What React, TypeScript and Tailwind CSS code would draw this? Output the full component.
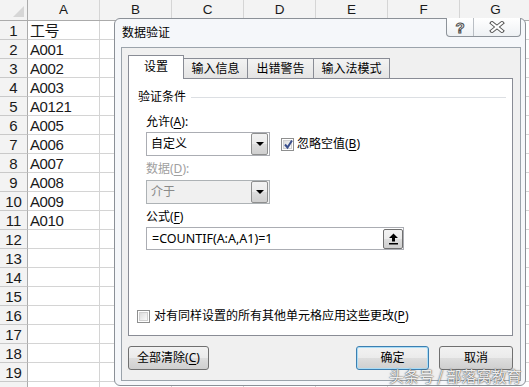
import React from 'react';

const cols = ['A', 'B', 'C', 'D', 'E', 'F', 'G'];
const colA = ['工号', 'A001', 'A002', 'A003', 'A0121', 'A005', 'A006', 'A007', 'A008', 'A009', 'A010'];

const btnBg = 'bg-[linear-gradient(#f2f2f2,#ebebeb_48%,#dddddd_52%,#cfcfcf)]';

// underlined access key, like windows dialogs draw it
const Key: React.FC<{ k: string }> = ({ k }) => <span className="underline underline-offset-2">{k}</span>;

const Sheet: React.FC = () => (
  <div className="font-['Liberation_Sans','Noto_Sans_CJK_SC',sans-serif] text-[15px] text-[#1a1a1a]">
    <div className="flex h-[21px] bg-[#f3f3f3] border-b border-[#ababab] text-[13.5px]">
      <div className="relative w-[28px] shrink-0 border-r border-[#ababab]">
        <div className="absolute right-[3px] bottom-[3px] w-0 h-0 border-l-[11px] border-l-transparent border-b-[11px] border-b-[#d6d6d6]" />
      </div>
      {cols.map((c) => (
        <div key={c} className="w-[72px] shrink-0 border-r border-[#d5d5d5] flex items-center justify-center">
          {c}
        </div>
      ))}
    </div>
    {Array.from({ length: 20 }, (_, i) => (
      <div key={i} className="flex h-[19px]">
        <div className="w-[28px] shrink-0 bg-[#f3f3f3] border-r border-b border-r-[#ababab] border-b-[#c9c9c9] flex items-center justify-center pt-[2px]">
          {i + 1}
        </div>
        {cols.map((c) => (
          <div key={c} className="w-[72px] shrink-0 border-r border-b border-[#d4d4d4] flex items-center pl-[2px] pt-[2px] tracking-[-0.4px]">
            {c === 'A' ? colA[i] ?? '' : ''}
          </div>
        ))}
      </div>
    ))}
  </div>
);

const DropBtn: React.FC = () => (
  <div className={`w-[17px] h-[22px] mr-[1px] rounded-[2px] border border-[#8e8f8f] ${btnBg} flex items-center justify-center`}>
    <div className="w-0 h-0 border-l-[4px] border-r-[4px] border-t-[4px] border-l-transparent border-r-transparent border-t-black" />
  </div>
);

const Checkbox: React.FC<{ checked?: boolean }> = ({ checked }) => (
  <div className="relative w-[13px] h-[13px] shrink-0 border border-[#8e8f8f] bg-white p-[1px]">
    <div className="w-full h-full bg-[linear-gradient(135deg,#dcdcdc,#fbfbfb)] border border-[#d0d0d0]" />
    {checked && (
      <svg className="absolute left-[1px] top-[0px]" width="11" height="11" viewBox="0 0 11 11">
        <path d="M2 5.5 L4.5 8.5 L9 1.5" fill="none" stroke="#3a4f8c" strokeWidth="2" />
      </svg>
    )}
  </div>
);

const Dialog: React.FC = () => (
  <div className="absolute left-[114px] top-[18px] w-[412px] h-[368px] rounded-[6px] border border-[#8b9097] bg-[#f5f7fa] pl-[6px] pr-[4px] pb-[4px] flex flex-col font-['Noto_Sans','Noto_Sans_CJK_SC',sans-serif] text-[12px] leading-[16px] text-black">
    <div className="h-[28px] shrink-0 flex items-center pl-[1px]">数据验证</div>

    {/* help / close caption buttons */}
    <div className="absolute left-[331px] top-[-1px] w-[75px] h-[19px] flex rounded-b-[4px] border border-t-0 border-[#8d939a] bg-[linear-gradient(#ffffff,#eef1f4)] overflow-hidden">
      <div className="w-[27px] border-r border-[#b9bec4] flex items-center justify-center">
        <span className="text-[15px] font-bold leading-none text-white [-webkit-text-stroke:1px_#4d4d4d] font-['Liberation_Sans',sans-serif]">?</span>
      </div>
      <div className="flex-1 flex items-center justify-center">
        <svg width="16" height="12" viewBox="0 0 16 12">
          <g strokeLinecap="square">
            <line x1="3" y1="2" x2="13" y2="10" stroke="#555" strokeWidth="4" />
            <line x1="13" y1="2" x2="3" y2="10" stroke="#555" strokeWidth="4" />
            <line x1="3" y1="2" x2="13" y2="10" stroke="#fff" strokeWidth="2" />
            <line x1="13" y1="2" x2="3" y2="10" stroke="#fff" strokeWidth="2" />
          </g>
        </svg>
      </div>
    </div>

    <div className="flex-1 border border-[#9ba3ab] bg-[#f0f0f0] flex flex-col pt-[7px]">
      {/* tabs */}
      <div className="relative z-10 -mb-px ml-[6px] flex items-end h-[24px]">
        <div className="relative z-10 w-[56px] h-[24px] border border-b-0 border-[#898c95] bg-white flex items-center justify-center pb-[1px]">
          设置
        </div>
        <div className="-ml-px w-[65px] h-[21px] border border-[#898c95] bg-[linear-gradient(#f3f3f3,#e4e4e4)] flex items-center justify-center">
          输入信息
        </div>
        <div className="-ml-px w-[67px] h-[21px] border border-[#898c95] bg-[linear-gradient(#f3f3f3,#e4e4e4)] flex items-center justify-center">
          出错警告
        </div>
        <div className="-ml-px w-[77px] h-[21px] border border-[#898c95] bg-[linear-gradient(#f3f3f3,#e4e4e4)] flex items-center justify-center">
          输入法模式
        </div>
      </div>

      {/* tab panel */}
      <div className="ml-[6px] w-[385px] h-[258px] border border-[#898c95] bg-white pl-[8px] pr-[6px] pt-[10px] flex flex-col">
        <div className="flex items-center h-[16px] ml-[1px]">
          <span>验证条件</span>
          <div className="flex-1 h-px bg-[#dcdfe3] ml-[5px]" />
        </div>

        <div className="ml-[9px] mt-[9px]">
          允许(<Key k="A" />):
        </div>
        <div className="ml-[9px] mt-[2px] flex items-center">
          <div className="w-[124px] h-[24px] border border-[#abadb3] bg-white flex items-center justify-between pl-[4px]">
            <span>自定义</span>
            <DropBtn />
          </div>
          <div className="ml-[11px]">
            <Checkbox checked />
          </div>
          <span className="ml-[3px]">
            忽略空值(<Key k="B" />)
          </span>
        </div>

        <div className="ml-[9px] mt-[5px] text-[#a0a0a0]">
          数据(<Key k="D" />):
        </div>
        <div className="ml-[9px] mt-[3px] w-[124px] h-[24px] border border-[#adb2b5] bg-[#f0f0f0] flex items-center justify-between pl-[4px] text-[#8a8a8a]">
          <span>介于</span>
          <DropBtn />
        </div>

        <div className="ml-[9px] mt-[5px]">
          公式(<Key k="F" />)
        </div>
        <div className="ml-[9px] mt-[2px] w-[258px] h-[23px] border border-[#abadb3] bg-white flex items-center pl-[5px]">
          <span className="text-[12.5px]">=COUNTIF(A:A,A1)=1</span>
          <div className={`ml-auto w-[20px] h-[20px] rounded-[2px] border border-[#707070] ${btnBg} flex items-center justify-center`}>
            <svg width="11" height="12" viewBox="0 0 11 12">
              <path d="M5.5 0.5 L10 5 L7 5 L7 8.5 L4 8.5 L4 5 L1 5 Z" fill="#000" />
              <rect x="1" y="10" width="9" height="1.5" fill="#000" />
            </svg>
          </div>
        </div>

        <div className="mt-[58px] flex items-center">
          <Checkbox />
          <span className="ml-[4px]">
            对有同样设置的所有其他单元格应用这些更改(<Key k="P" />)
          </span>
        </div>
      </div>

      {/* buttons */}
      <div className="mt-[10px] ml-[6px] mr-[7px] flex items-center">
        <div className={`w-[81px] h-[24px] rounded-[3px] border border-[#707070] ${btnBg} flex items-center justify-center`}>
          全部清除(<Key k="C" />)
        </div>
        <div className={`ml-auto w-[73px] h-[24px] rounded-[3px] border border-[#3c7fb1] ${btnBg} shadow-[inset_0_0_0_1px_#a9dcf6] flex items-center justify-center`}>
          确定
        </div>
        <div className={`ml-[10px] w-[74px] h-[24px] rounded-[3px] border border-[#707070] ${btnBg} flex items-center justify-center`}>
          取消
        </div>
      </div>
    </div>
  </div>
);

const App: React.FC = () => (
  <div className="relative w-[529px] h-[387px] overflow-hidden bg-white">
    <Sheet />
    <Dialog />
    <div className="absolute left-[389px] top-[366px] text-[15px] leading-[20px] text-white/90 font-['Noto_Sans_CJK_SC',sans-serif] [text-shadow:0_0_1px_#333,0_0_2px_#666]">
      头条号 / 部落窝教育
    </div>
  </div>
);

export default App;
